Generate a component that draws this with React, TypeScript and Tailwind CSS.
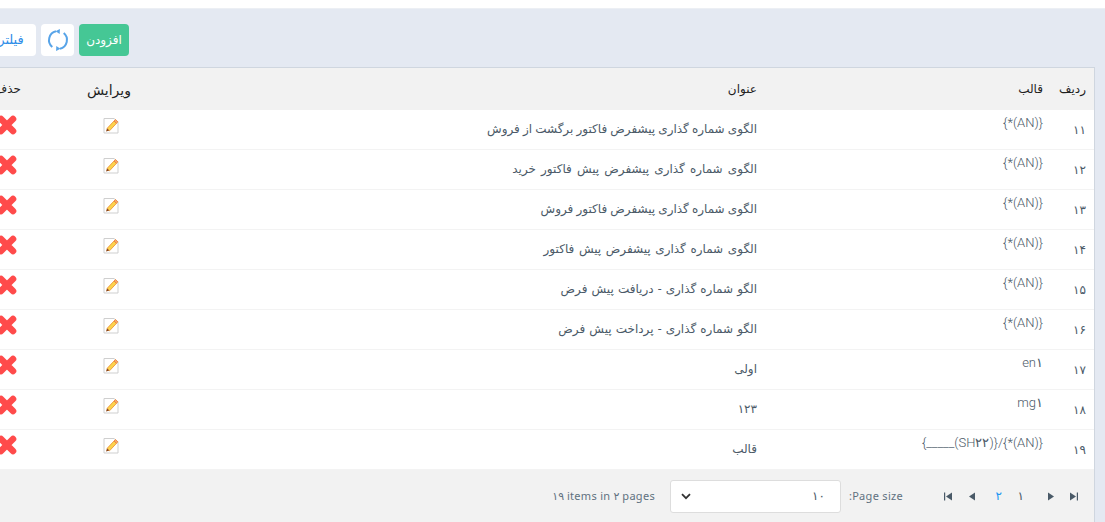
const rows = [
  { id: "۱۱", pattern: "{(AN)*}", title: "الگوی شماره گذاری پیشفرض فاکتور برگشت از فروش", spacing: "" },
  { id: "۱۲", pattern: "{(AN)*}", title: "الگوی شماره گذاری پیشفرض پیش فاکتور خرید", spacing: "[word-spacing:2px]" },
  { id: "۱۳", pattern: "{(AN)*}", title: "الگوی شماره گذاری پیشفرض فاکتور فروش", spacing: "" },
  { id: "۱۴", pattern: "{(AN)*}", title: "الگوی شماره گذاری پیشفرض پیش فاکتور", spacing: "[word-spacing:1.5px]" },
  { id: "۱۵", pattern: "{(AN)*}", title: "الگو شماره گذاری - دریافت پیش فرض", spacing: "[word-spacing:1px]" },
  { id: "۱۶", pattern: "{(AN)*}", title: "الگو شماره گذاری - پرداخت پیش فرض", spacing: "[word-spacing:1px]" },
  { id: "۱۷", pattern: "en۱", title: "اولی", spacing: "" },
  { id: "۱۸", pattern: "mg۱", title: "۱۲۳", spacing: "" },
  { id: "۱۹", pattern: "{(AN)*}/{(SH۲۲)_____}", title: "قالب", spacing: "" },
];

const EditIcon = () => (
  <svg width="16" height="17" viewBox="0 0 16 17">
    <path d="M1 1.5h10l4 3.5v11H1z" fill="#fff" stroke="#cfcfcf" strokeWidth="1" />
    <path d="M4 11.5l7-7.5 2.5 2.3-7 7.5z" fill="#fcd34d" stroke="#ee9a3c" strokeWidth="0.9" />
    <path d="M11 4l1.5-1.5 2.4 2.3-1.5 1.5z" fill="#f7a66e" stroke="#ee7f35" strokeWidth="0.8" />
    <path d="M4 11.5l-1 3 3.4-1z" fill="#8a4516" />
  </svg>
);

const DeleteIcon = () => (
  <svg width="20" height="20" viewBox="0 0 20 20" className="shrink-0">
    <path d="M4 4l12 12M16 4L4 16" stroke="#ff4b4b" strokeWidth="6.6" strokeLinecap="round" />
  </svg>
);

const RefreshIcon = () => (
  <svg width="24" height="24" viewBox="0 0 24 24" fill="none">
    <path d="M10 3.3A9 9 0 0 0 6.3 19" stroke="#58a4e8" strokeWidth="2" />
    <path d="M14 20.7A9 9 0 0 0 17.7 5" stroke="#58a4e8" strokeWidth="2" />
    <path d="M9.5 3.3l4.4-2.3-.2 4.9z" fill="#58a4e8" />
    <path d="M14.5 20.7l-4.4 2.3.2-4.9z" fill="#58a4e8" />
  </svg>
);

const PagerIcon = ({ dir, bar }: { dir: "left" | "right"; bar?: boolean }) => (
  <svg width="9" height="9" viewBox="0 0 9 9" fill="#4a5a68">
    {dir === "left" ? <path d="M8 .5v8L2 4.5z" /> : <path d="M1 .5v8l6-4z" />}
    {bar && (dir === "left" ? <rect x="0" y="0.5" width="1.2" height="8" /> : <rect x="7.8" y="0.5" width="1.2" height="8" />)}
  </svg>
);

export default function App() {
  return (
    <div
      dir="rtl"
      className="w-[1105px] h-[522px] overflow-hidden bg-[#e4e9f2] font-['Noto_Sans','DejaVu_Sans',sans-serif] text-[12px] text-[#4b5a68]"
    >
      <div className="h-[9px] bg-white border-b border-[#eceff4]" />

      <div className="flex justify-end gap-[5px] h-8 mt-[15px] mr-[10px] w-[1134px] pl-[25px]">
        <button className="w-[50px] shrink-0 rounded-[4px] bg-[#45c795] text-white text-[12px]">افزودن</button>
        <button className="w-[33px] shrink-0 rounded-[4px] bg-white flex items-center justify-center">
          <RefreshIcon />
        </button>
        <button className="w-[50px] shrink-0 rounded-[4px] bg-white text-[#2f8de8] text-[13px]">فیلتر</button>
      </div>

      <div className="mt-[11px] mr-[10px] w-[1134px] border-t border-r border-[#cfd6df]">
        <div className="flex h-[42px] items-center bg-[#f2f2f2] text-[#1f1f1f] text-[12px]">
          <div className="w-[43px] pr-[8px] shrink-0">ردیف</div>
          <div className="w-[286px] pr-[8px] shrink-0">قالب</div>
          <div className="w-[626px] pr-[8px] shrink-0">عنوان</div>
          <div className="w-[110px] pr-[8px] shrink-0 text-[14px]">ویرایش</div>
          <div className="flex-1 pr-[8px]">حذف</div>
        </div>

        {rows.map((row) => (
          <div key={row.id} className="flex h-10 bg-white border-b border-[#f3f3f3]">
            <div className="w-[43px] pr-[8px] pt-[11px] shrink-0 text-[12px]">{row.id}</div>
            <div className="w-[286px] pr-[8px] pt-[3px] shrink-0 text-[13px] font-['Roboto','DejaVu_Sans',sans-serif] font-light">{row.pattern}</div>
            <div className={`w-[626px] pr-[8px] pt-[10px] shrink-0 ${row.spacing}`}>{row.title}</div>
            <div className="w-[110px] pr-[20px] pt-[7px] shrink-0">
              <EditIcon />
            </div>
            <div className="flex-1 pr-[12px] pt-[5px]">
              <DeleteIcon />
            </div>
          </div>
        ))}

        <div className="flex h-[52px] items-center bg-[#f2f2f2]">
          <div className="flex items-center w-[191px] shrink-0 pr-[16px]">
            <span className="w-[22px]"><PagerIcon dir="right" bar /></span>
            <span className="w-[32px]"><PagerIcon dir="right" /></span>
            <span className="w-[22px] text-[12px]">۱</span>
            <span className="w-[26px] text-[12px] text-[#2196f3]">۲</span>
            <span className="w-[23px]"><PagerIcon dir="left" /></span>
            <span><PagerIcon dir="left" bar /></span>
          </div>
          <span className="w-[56px] shrink-0 text-[11px] tracking-[0.3px] text-[#5f7180]">Page size:</span>
          <div className="mr-[6px] w-[171px] h-[33px] shrink-0 rounded-[3px] border border-[#dddddd] bg-white flex items-center justify-between pr-[15px] pl-[10px] text-[12px]">
            <span>۱۰</span>
            <svg width="10" height="7" viewBox="0 0 10 7" fill="none">
              <path d="M1 1.2l4 4 4-4" stroke="#333" strokeWidth="1.8" />
            </svg>
          </div>
          <span dir="ltr" className="mr-[15px] text-[11px] tracking-[0.3px] text-[#5f7180]">۱۹ items in ۲ pages</span>
        </div>
      </div>
    </div>
  );
}
